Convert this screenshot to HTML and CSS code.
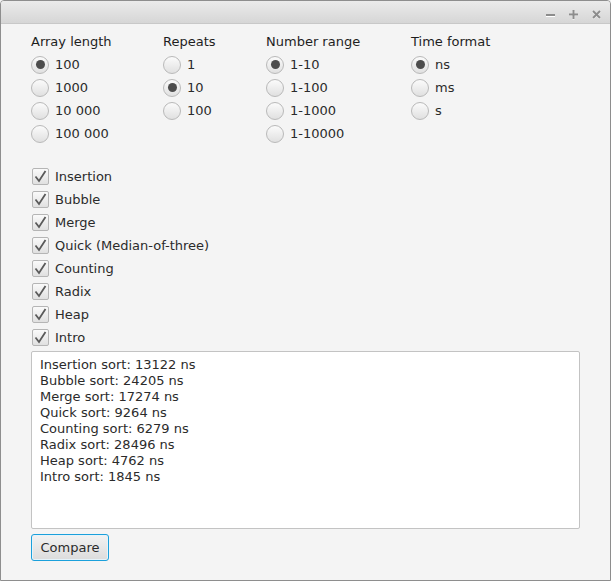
FILE: index.html
```html
<!DOCTYPE html>
<html>
<head>
<meta charset="utf-8">
<link rel="stylesheet" href="styles.css">
</head>
<body>
<div class="window">
  <div class="titlebar">
    <div class="wm-buttons">
      <svg class="wm" width="11" height="11" viewBox="0 0 11 11"><rect x="1" y="6" width="9" height="2" fill="#fff"/><rect x="1" y="5" width="9" height="2" fill="#8c8c8c"/></svg>
      <svg class="wm" width="11" height="11" viewBox="0 0 11 11"><g fill="#fff"><rect x="1" y="5" width="9" height="2"/><rect x="4.5" y="1.5" width="2" height="9"/></g><g fill="#8c8c8c"><rect x="1" y="4.5" width="9" height="2"/><rect x="4.5" y="1" width="2" height="9"/></g></svg>
      <svg class="wm" width="11" height="11" viewBox="0 0 11 11"><g stroke="#fff" stroke-width="2"><line x1="2" y1="2.5" x2="9" y2="9.5"/><line x1="9" y1="2.5" x2="2" y2="9.5"/></g><g stroke="#8c8c8c" stroke-width="2"><line x1="2" y1="2" x2="9" y2="9"/><line x1="9" y1="2" x2="2" y2="9"/></g></svg>
    </div>
  </div>
  <div class="content">
    <div class="groups">
      <div class="group g1">
        <div class="heading">Array length</div>
        <div class="row"><span class="radio on"></span>100</div>
        <div class="row"><span class="radio"></span>1000</div>
        <div class="row"><span class="radio"></span>10 000</div>
        <div class="row"><span class="radio"></span>100 000</div>
      </div>
      <div class="group g2">
        <div class="heading">Repeats</div>
        <div class="row"><span class="radio"></span>1</div>
        <div class="row"><span class="radio on"></span>10</div>
        <div class="row"><span class="radio"></span>100</div>
      </div>
      <div class="group g3">
        <div class="heading">Number range</div>
        <div class="row"><span class="radio on"></span>1-10</div>
        <div class="row"><span class="radio"></span>1-100</div>
        <div class="row"><span class="radio"></span>1-1000</div>
        <div class="row"><span class="radio"></span>1-10000</div>
      </div>
      <div class="group g4">
        <div class="heading">Time format</div>
        <div class="row"><span class="radio on"></span>ns</div>
        <div class="row"><span class="radio"></span>ms</div>
        <div class="row"><span class="radio"></span>s</div>
      </div>
    </div>
    <div class="checks">
      <div class="row"><span class="check"><svg width="15" height="15" viewBox="0 0 15 15"><path d="M2.5 7.5 L6 12 L12.5 2" fill="none" stroke="#5a5a5a" stroke-width="1.8"/></svg></span>Insertion</div>
      <div class="row"><span class="check"><svg width="15" height="15" viewBox="0 0 15 15"><path d="M2.5 7.5 L6 12 L12.5 2" fill="none" stroke="#5a5a5a" stroke-width="1.8"/></svg></span>Bubble</div>
      <div class="row"><span class="check"><svg width="15" height="15" viewBox="0 0 15 15"><path d="M2.5 7.5 L6 12 L12.5 2" fill="none" stroke="#5a5a5a" stroke-width="1.8"/></svg></span>Merge</div>
      <div class="row"><span class="check"><svg width="15" height="15" viewBox="0 0 15 15"><path d="M2.5 7.5 L6 12 L12.5 2" fill="none" stroke="#5a5a5a" stroke-width="1.8"/></svg></span>Quick (Median-of-three)</div>
      <div class="row"><span class="check"><svg width="15" height="15" viewBox="0 0 15 15"><path d="M2.5 7.5 L6 12 L12.5 2" fill="none" stroke="#5a5a5a" stroke-width="1.8"/></svg></span>Counting</div>
      <div class="row"><span class="check"><svg width="15" height="15" viewBox="0 0 15 15"><path d="M2.5 7.5 L6 12 L12.5 2" fill="none" stroke="#5a5a5a" stroke-width="1.8"/></svg></span>Radix</div>
      <div class="row"><span class="check"><svg width="15" height="15" viewBox="0 0 15 15"><path d="M2.5 7.5 L6 12 L12.5 2" fill="none" stroke="#5a5a5a" stroke-width="1.8"/></svg></span>Heap</div>
      <div class="row"><span class="check"><svg width="15" height="15" viewBox="0 0 15 15"><path d="M2.5 7.5 L6 12 L12.5 2" fill="none" stroke="#5a5a5a" stroke-width="1.8"/></svg></span>Intro</div>
    </div>
    <div class="output">
      <div>Insertion sort: 13122 ns</div>
      <div>Bubble sort: 24205 ns</div>
      <div>Merge sort: 17274 ns</div>
      <div>Quick sort: 9264 ns</div>
      <div>Counting sort: 6279 ns</div>
      <div>Radix sort: 28496 ns</div>
      <div>Heap sort: 4762 ns</div>
      <div>Intro sort: 1845 ns</div>
    </div>
    <button class="btn">Compare</button>
  </div>
</div>
</body>
</html>
```
FILE: styles.css
```css
html, body {
  margin: 0;
  padding: 0;
  background: #f4f4f4;
}
.window {
  box-sizing: border-box;
  width: 611px;
  height: 581px;
  border: 1px solid #8e8e8e;
  border-radius: 4px 4px 0 0;
  background: #f4f4f4;
  font-family: "DejaVu Sans", sans-serif;
  font-size: 13px;
  color: #2b2b2b;
  overflow: hidden;
}
.titlebar {
  height: 23px;
  background: linear-gradient(#ebebeb, #d6d6d6);
  border-bottom: 1px solid #c8c8c8;
  box-sizing: border-box;
  display: flex;
  justify-content: flex-end;
  align-items: center;
}
.wm-buttons {
  display: flex;
  gap: 12px;
  padding-right: 8px;
  padding-top: 5px;
}
.wm { display: block; }
.content {
  padding: 6px 0 0 30px;
}
.groups {
  display: flex;
}
.g1 { width: 132px; }
.g2 { width: 103px; }
.g3 { width: 145px; }
.g4 { width: 120px; }
.heading {
  height: 23px;
  line-height: 23px;
  color: #1e1e1e;
}
.row {
  height: 23px;
  display: flex;
  align-items: center;
  color: #2b2b2b;
}
.radio {
  box-sizing: border-box;
  width: 18px;
  height: 18px;
  border-radius: 50%;
  border: 1px solid #b9b9b9;
  background: linear-gradient(#fbfbfb, #e0e0e0);
  margin-right: 6px;
  display: flex;
  align-items: center;
  justify-content: center;
}
.radio.on::after {
  content: "";
  width: 9px;
  height: 9px;
  border-radius: 50%;
  background: #4d4d4d;
}
.checks {
  margin-top: 20px;
}
.check {
  box-sizing: border-box;
  width: 17px;
  height: 17px;
  border: 1px solid #b5b5b5;
  border-radius: 2px;
  background: linear-gradient(#fafafa, #e0e0e0);
  margin-left: 1px;
  margin-right: 6px;
  display: flex;
  align-items: center;
  justify-content: center;
}
.check svg { display: block; }
.output {
  box-sizing: border-box;
  margin-top: 2px;
  width: 549px;
  height: 178px;
  background: #fff;
  border: 1px solid #c3c3c3;
  border-radius: 2px;
  padding: 5px 8px;
  line-height: 16px;
  color: #2b2b2b;
}
.btn {
  display: block;
  margin-top: 5px;
  box-sizing: border-box;
  width: 78px;
  height: 27px;
  border: 1px solid #1ba0db;
  border-radius: 3px;
  box-shadow: inset 0 0 0 1px #e6f3fa;
  background: linear-gradient(#f2f2f2, #dcdcdc);
  font-family: "DejaVu Sans", sans-serif;
  font-size: 13px;
  color: #2b2b2b;
  padding: 0;
}
```
